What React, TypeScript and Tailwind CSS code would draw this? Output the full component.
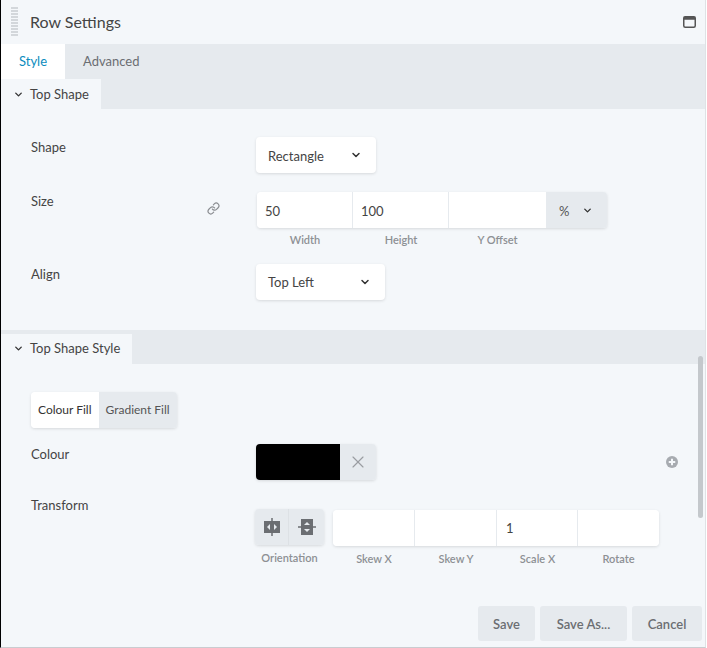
import { ChevronDown, Link, X } from 'lucide-react'

const font = { fontFamily: 'Lato, "Noto Sans", sans-serif' }

function DragHandle() {
  return (
    <svg width="7" height="30" viewBox="0 0 7 30" className="shrink-0">
      {Array.from({ length: 10 }).map((_, i) => (
        <rect key={i} x="0" y={i * 3} width="7" height="2" fill="#d3d7db" />
      ))}
    </svg>
  )
}

function MaximizeIcon() {
  return (
    <svg width="13" height="12" viewBox="0 0 13 12">
      <rect x="0.75" y="0.75" width="11.5" height="10.5" rx="1.5" fill="none" stroke="#555" strokeWidth="1.5" />
      <rect x="0.75" y="0.75" width="11.5" height="3" fill="#555" />
    </svg>
  )
}

function FlipH() {
  return (
    <svg width="18" height="20" viewBox="0 0 18 20">
      <rect x="1" y="4" width="16" height="12" fill="#6b6e72" />
      <rect x="8.25" y="1" width="1.5" height="18" fill="#6b6e72" />
      <path d="M7 7 L4 10 L7 13 Z" fill="#e6eaee" />
      <path d="M11 7 L14 10 L11 13 Z" fill="#e6eaee" />
    </svg>
  )
}

function FlipV() {
  return (
    <svg width="20" height="18" viewBox="0 0 20 18">
      <rect x="4" y="1" width="12" height="16" fill="#6b6e72" />
      <rect x="1" y="8.25" width="18" height="1.5" fill="#6b6e72" />
      <path d="M7 7 L10 4 L13 7 Z" fill="#e6eaee" />
      <path d="M7 11 L10 14 L13 11 Z" fill="#e6eaee" />
    </svg>
  )
}

function PlusCircle() {
  return (
    <svg width="12" height="12" viewBox="0 0 12 12">
      <circle cx="6" cy="6" r="6" fill="#a7abb0" />
      <rect x="2.75" y="5" width="6.5" height="2" fill="#f4f7fa" />
      <rect x="5" y="2.75" width="2" height="6.5" fill="#f4f7fa" />
    </svg>
  )
}

function Select({ value, width }: { value: string; width: string }) {
  return (
    <div className={`${width} h-[36px] bg-white rounded-[4px] shadow-[0_1px_3px_rgba(0,0,0,0.12)] flex items-center justify-between pl-[12px] pr-[14px] text-[13px] text-[#444]`}>
      <span className="pt-[3px]">{value}</span>
      <ChevronDown size={12} strokeWidth={3} className="text-[#333]" />
    </div>
  )
}

function SectionHeader({ title, tabWidth, top }: { title: string; tabWidth: string; top?: boolean }) {
  return (
    <div className={`bg-[#e6eaee] flex ${top ? '' : 'pt-[4px]'}`}>
      <div className={`${tabWidth} h-[30px] bg-[#f4f7fa] flex items-center pl-[12px] gap-[6px] text-[13px] text-[#444]`}>
        <ChevronDown size={11} strokeWidth={3} className="text-[#333]" />
        <span className="pt-[1px]">{title}</span>
      </div>
    </div>
  )
}

function Label({ children, className = '' }: { children: React.ReactNode; className?: string }) {
  return <div className={`w-[255px] shrink-0 pl-[30px] text-[13px] leading-5 text-[#444] ${className}`}>{children}</div>
}

function SubLabel({ children, className = '' }: { children: React.ReactNode; className?: string }) {
  return <div className={`text-center text-[11px] font-semibold text-[#8d9094] ${className}`}>{children}</div>
}

export default function App() {
  return (
    <div style={font} className="w-[707px] h-[648px] bg-white overflow-hidden">
      <div className="relative w-[706px] h-[648px] bg-[#f4f7fa] border-l border-black border-r border-r-[#dfe2e5] border-b border-b-[#c9ccd0] flex flex-col">
        {/* Title bar */}
        <div className="h-[44px] flex items-center pl-[10px] pr-[9px] shrink-0">
          <DragHandle />
          <div className="ml-[12px] text-[16px] text-[#444] flex-1">Row Settings</div>
          <MaximizeIcon />
        </div>

        {/* Tabs */}
        <div className="h-[35px] bg-[#e6eaee] flex items-center shrink-0 text-[13px]">
          <div className="w-[64px] h-full bg-white flex items-center justify-center text-[#0b8cbe]">Style</div>
          <div className="px-[18px] text-[#6b6e72]">Advanced</div>
        </div>

        <SectionHeader title="Top Shape" tabWidth="w-[100px]" top />

        {/* Top Shape fields */}
        <div className="pt-[28px] pb-[30px] flex flex-col">
          <div className="flex">
            <Label>Shape</Label>
            <Select value="Rectangle" width="w-[120px]" />
          </div>

          <div className="flex mt-[19px]">
            <Label className="relative -mt-[1px]">
              Size
              <Link size={13} strokeWidth={2.2} className="absolute left-[206px] top-[11px] text-[#8a8d91]" />
            </Label>
            <div className="ml-[1px] flex flex-col">
              <div className="flex h-[36px] w-[350px] rounded-[4px] overflow-hidden shadow-[0_1px_3px_rgba(0,0,0,0.12)] text-[13px] text-[#444]">
                <div className="w-[96px] bg-white flex items-center pl-[8px] pt-[3px] border-r border-[#e6eaee]">50</div>
                <div className="w-[96px] bg-white flex items-center pl-[8px] pt-[3px] border-r border-[#e6eaee]">100</div>
                <div className="w-[97px] bg-white"></div>
                <div className="flex-1 bg-[#e6eaee] flex items-center justify-between pl-[13px] pr-[14px] text-[#555]">
                  <span className="pt-[3px]">%</span>
                  <ChevronDown size={11} strokeWidth={3} className="text-[#333]" />
                </div>
              </div>
              <div className="flex mt-[4px]">
                <SubLabel className="w-[96px]">Width</SubLabel>
                <SubLabel className="w-[96px]">Height</SubLabel>
                <SubLabel className="w-[97px]">Y Offset</SubLabel>
              </div>
            </div>
          </div>

          <div className="flex mt-[15px]">
            <Label>Align</Label>
            <Select value="Top Left" width="w-[129px]" />
          </div>
        </div>

        <SectionHeader title="Top Shape Style" tabWidth="w-[131px]" />

        {/* Top Shape Style fields */}
        <div className="pt-[28px] flex flex-col">
          <div className="pl-[30px]">
            <div className="inline-flex h-[36px] rounded-[4px] overflow-hidden shadow-[0_1px_3px_rgba(0,0,0,0.12)] text-[12px]">
              <div className="bg-white px-[7px] pt-[1px] flex items-center text-[#333]">Colour Fill</div>
              <div className="bg-[#e6eaee] px-[7px] pt-[1px] flex items-center text-[#555]">Gradient Fill</div>
            </div>
          </div>

          <div className="flex mt-[16px] items-start">
            <Label>Colour</Label>
            <div className="flex h-[36px] rounded-[4px] overflow-hidden shadow-[0_1px_3px_rgba(0,0,0,0.12)]">
              <div className="w-[84px] bg-black"></div>
              <div className="w-[36px] bg-[#e6eaee] flex items-center justify-center">
                <X size={20} strokeWidth={1.4} className="text-[#9a9da1]" />
              </div>
            </div>
            <div className="ml-auto mr-[27px] mt-[12px]">
              <PlusCircle />
            </div>
          </div>

          <div className="flex mt-[29px]">
            <Label className="-mt-[14px]">Transform</Label>
            <div className="flex flex-col -ml-[1px]">
              <div className="flex h-[36px] w-[69px] rounded-[4px] overflow-hidden shadow-[0_1px_3px_rgba(0,0,0,0.12)]">
                <div className="w-[34px] bg-[#e6eaee] flex items-center justify-center border-r border-[#dde1e5]"><FlipH /></div>
                <div className="flex-1 bg-[#e6eaee] flex items-center justify-center"><FlipV /></div>
              </div>
              <SubLabel className="mt-[5px] font-medium">Orientation</SubLabel>
            </div>
            <div className="flex flex-col ml-[9px] mt-[1px]">
              <div className="flex h-[36px] w-[326px] rounded-[4px] overflow-hidden shadow-[0_1px_3px_rgba(0,0,0,0.12)] text-[13px] text-[#444]">
                <div className="w-[82px] bg-white border-r border-[#e6eaee]"></div>
                <div className="w-[82px] bg-white border-r border-[#e6eaee]"></div>
                <div className="w-[81px] bg-white border-r border-[#e6eaee] flex items-center pl-[9px] pt-[3px]">1</div>
                <div className="flex-1 bg-white"></div>
              </div>
              <div className="flex mt-[5px]">
                <SubLabel className="w-[82px]">Skew X</SubLabel>
                <SubLabel className="w-[82px]">Skew Y</SubLabel>
                <SubLabel className="w-[81px]">Scale X</SubLabel>
                <SubLabel className="flex-1">Rotate</SubLabel>
              </div>
            </div>
          </div>
        </div>

        {/* Footer */}
        <div className="mt-auto mb-[6px] flex justify-end gap-[5px] pr-[3px] text-[13px] font-semibold text-[#6b6e72]">
          <button className="w-[57px] h-[35px] pt-[2px] rounded-[3px] bg-[#e6eaee]">Save</button>
          <button className="w-[87px] h-[35px] pt-[2px] rounded-[3px] bg-[#e6eaee]">Save As...</button>
          <button className="w-[70px] h-[35px] pt-[2px] rounded-[3px] bg-[#e6eaee]">Cancel</button>
        </div>

        {/* Scrollbar thumb */}
        <div className="absolute left-[697px] top-[356px] w-[5px] h-[162px] rounded-full bg-[#c4c8cc]"></div>
      </div>
    </div>
  )
}
